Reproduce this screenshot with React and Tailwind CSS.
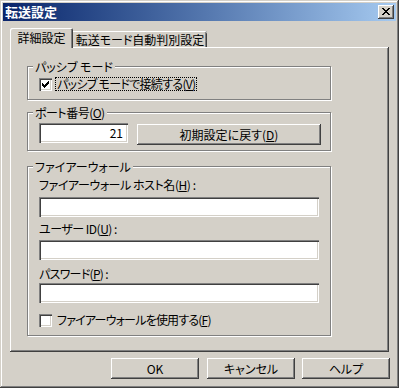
import React from 'react';

// classic 3D edges
const raised = 'bg-[#d4d0c8] shadow-[inset_-1px_-1px_0_#404040,inset_1px_1px_0_#ffffff,inset_-2px_-2px_0_#808080]';
const sunken = 'bg-white shadow-[inset_1px_1px_0_#808080,inset_2px_2px_0_#404040,inset_-1px_-1px_0_#ffffff,inset_-2px_-2px_0_#d4d0c8]';
const etched = 'border border-[#808080] shadow-[inset_1px_1px_0_#ffffff,1px_1px_0_#ffffff]';

function U({ children }) {
  return <span className="underline underline-offset-[1px]">{children}</span>;
}

function CheckBox({ checked }) {
  return (
    <div className={`w-[13px] h-[13px] shrink-0 ${sunken}`}>
      {checked && (
        <svg width="13" height="13" viewBox="0 0 13 13" shapeRendering="crispEdges">
          <path
            d="M9 3h1v1h-1z M8 4h2v1h-2z M3 5h1v1h-1z M7 5h3v1h-3z M3 6h2v1h-2z M6 6h3v1h-3z M3 7h5v1h-5z M4 8h3v1h-3z M5 9h1v1h-1z"
            fill="#000"
          />
        </svg>
      )}
    </div>
  );
}

function Group({ label, className, children }) {
  return (
    <div className={`w-[304px] ${etched} ${className}`}>
      <div className="-mt-[7px] ml-[5px] w-fit px-[2px] bg-[#d4d0c8] leading-[14px] relative">{label}</div>
      <div className="pl-[11px]">{children}</div>
    </div>
  );
}

function Edit({ value, className = '' }) {
  return (
    <div className={`h-[20px] ${sunken} leading-[20px] text-right pr-[5px] ${className}`}>{value}</div>
  );
}

function Button({ children, className = '' }) {
  return (
    <div className={`h-[21px] flex items-center justify-center leading-[14px] ${raised} ${className}`}>{children}</div>
  );
}

export default function App() {
  return (
    <div className="w-[399px] h-[388px] p-[3px] bg-[#d4d0c8] text-black text-[12px] font-['Noto_Sans_CJK_JP',sans-serif] [font-feature-settings:'palt'] shadow-[inset_-1px_-1px_0_#404040,inset_1px_1px_0_#d4d0c8,inset_-2px_-2px_0_#808080,inset_2px_2px_0_#ffffff]">
      {/* title bar */}
      <div className="h-[18px] flex items-center justify-between bg-linear-to-r from-[#0a246a] to-[#a6caf0]">
        <div className="pl-[2px] text-white font-bold text-[13px] leading-[18px]">転送設定</div>
        <div className={`mr-[2px] w-[16px] h-[14px] ${raised}`}>
          <svg width="16" height="14" viewBox="0 0 16 14" shapeRendering="crispEdges">
            <path
              d="M4 3h2v1h-2z M10 3h2v1h-2z M5 4h2v1h-2z M9 4h2v1h-2z M6 5h4v1h-4z M7 6h2v1h-2z M6 7h4v1h-4z M5 8h2v1h-2z M9 8h2v1h-2z M4 9h2v1h-2z M10 9h2v1h-2z"
              fill="#000"
            />
          </svg>
        </div>
      </div>

      {/* tabs */}
      <div className="mx-[7px] mt-[7px] h-[19px] flex items-end">
        <div className="relative z-10 w-[63px] h-[20px] -mb-[1px] bg-[#d4d0c8] rounded-tl-[2px] rounded-tr-[2px] shadow-[inset_1px_1px_0_#ffffff,inset_-1px_0_0_#404040,inset_-2px_0_0_#808080] flex justify-center pt-[3px] leading-[14px]">
          詳細設定
        </div>
        <div className="w-[134px] h-[16px] rounded-tr-[2px] shadow-[inset_0_1px_0_#ffffff,inset_-1px_0_0_#404040,inset_-2px_0_0_#808080] flex justify-center pt-[2px] leading-[14px]">
          転送モード自動判別設定
        </div>
      </div>

      {/* panel */}
      <div className="mx-[7px] h-[305px] pl-[17px] pt-[19px] shadow-[inset_-1px_-1px_0_#404040,inset_1px_1px_0_#ffffff,inset_-2px_-2px_0_#808080]">
        <Group label="パッシブ モード" className="h-[34px]">
          <div className="mt-[4px] flex items-start">
            <CheckBox checked />
            <div className="ml-[3px] -mt-[1px] px-[1px] border border-dotted border-black leading-[12px] h-[14px] tracking-[-0.7px]">
              パッシブ モードで接続する(<U>V</U>)
            </div>
          </div>
        </Group>

        <Group label={<span className="tracking-[-0.5px]">ポート番号(<U>O</U>)</span>} className="h-[39px] mt-[12px]">
          <div className="mt-[3px] flex items-start">
            <Edit value="21" className="w-[89px]" />
            <Button className="w-[184px] ml-[9px] mt-[1px]">
              初期設定に戻す(<U>D</U>)
            </Button>
          </div>
        </Group>

        <Group label="ファイアーウォール" className="h-[170px] mt-[15px]">
          <div className="mt-[4px] leading-[14px] tracking-[-0.45px]">
            ファイアーウォール ホスト名(<U>H</U>) :
          </div>
          <Edit className="mt-[5px] w-[280px]" />
          <div className="mt-[5px] leading-[14px] tracking-[-0.5px]">
            ユーザー ID(<U>U</U>) :
          </div>
          <Edit className="mt-[4px] w-[280px]" />
          <div className="mt-[7px] leading-[14px] tracking-[-0.7px]">
            パスワード(<U>P</U>) :
          </div>
          <Edit className="mt-[2px] w-[280px]" />
          <div className="mt-[11px] flex items-start">
            <CheckBox />
            <div className="ml-[5px] -mt-[1px] leading-[14px] tracking-[-0.8px]">
              ファイアーウォールを使用する(<U>F</U>)
            </div>
          </div>
        </Group>
      </div>

      {/* buttons */}
      <div className="mt-[6px] flex">
        <Button className="ml-[108px] w-[88px]">OK</Button>
        <Button className="ml-[8px] w-[88px]">キャンセル</Button>
        <Button className="ml-[7px] w-[88px]">ヘルプ</Button>
      </div>
    </div>
  );
}
